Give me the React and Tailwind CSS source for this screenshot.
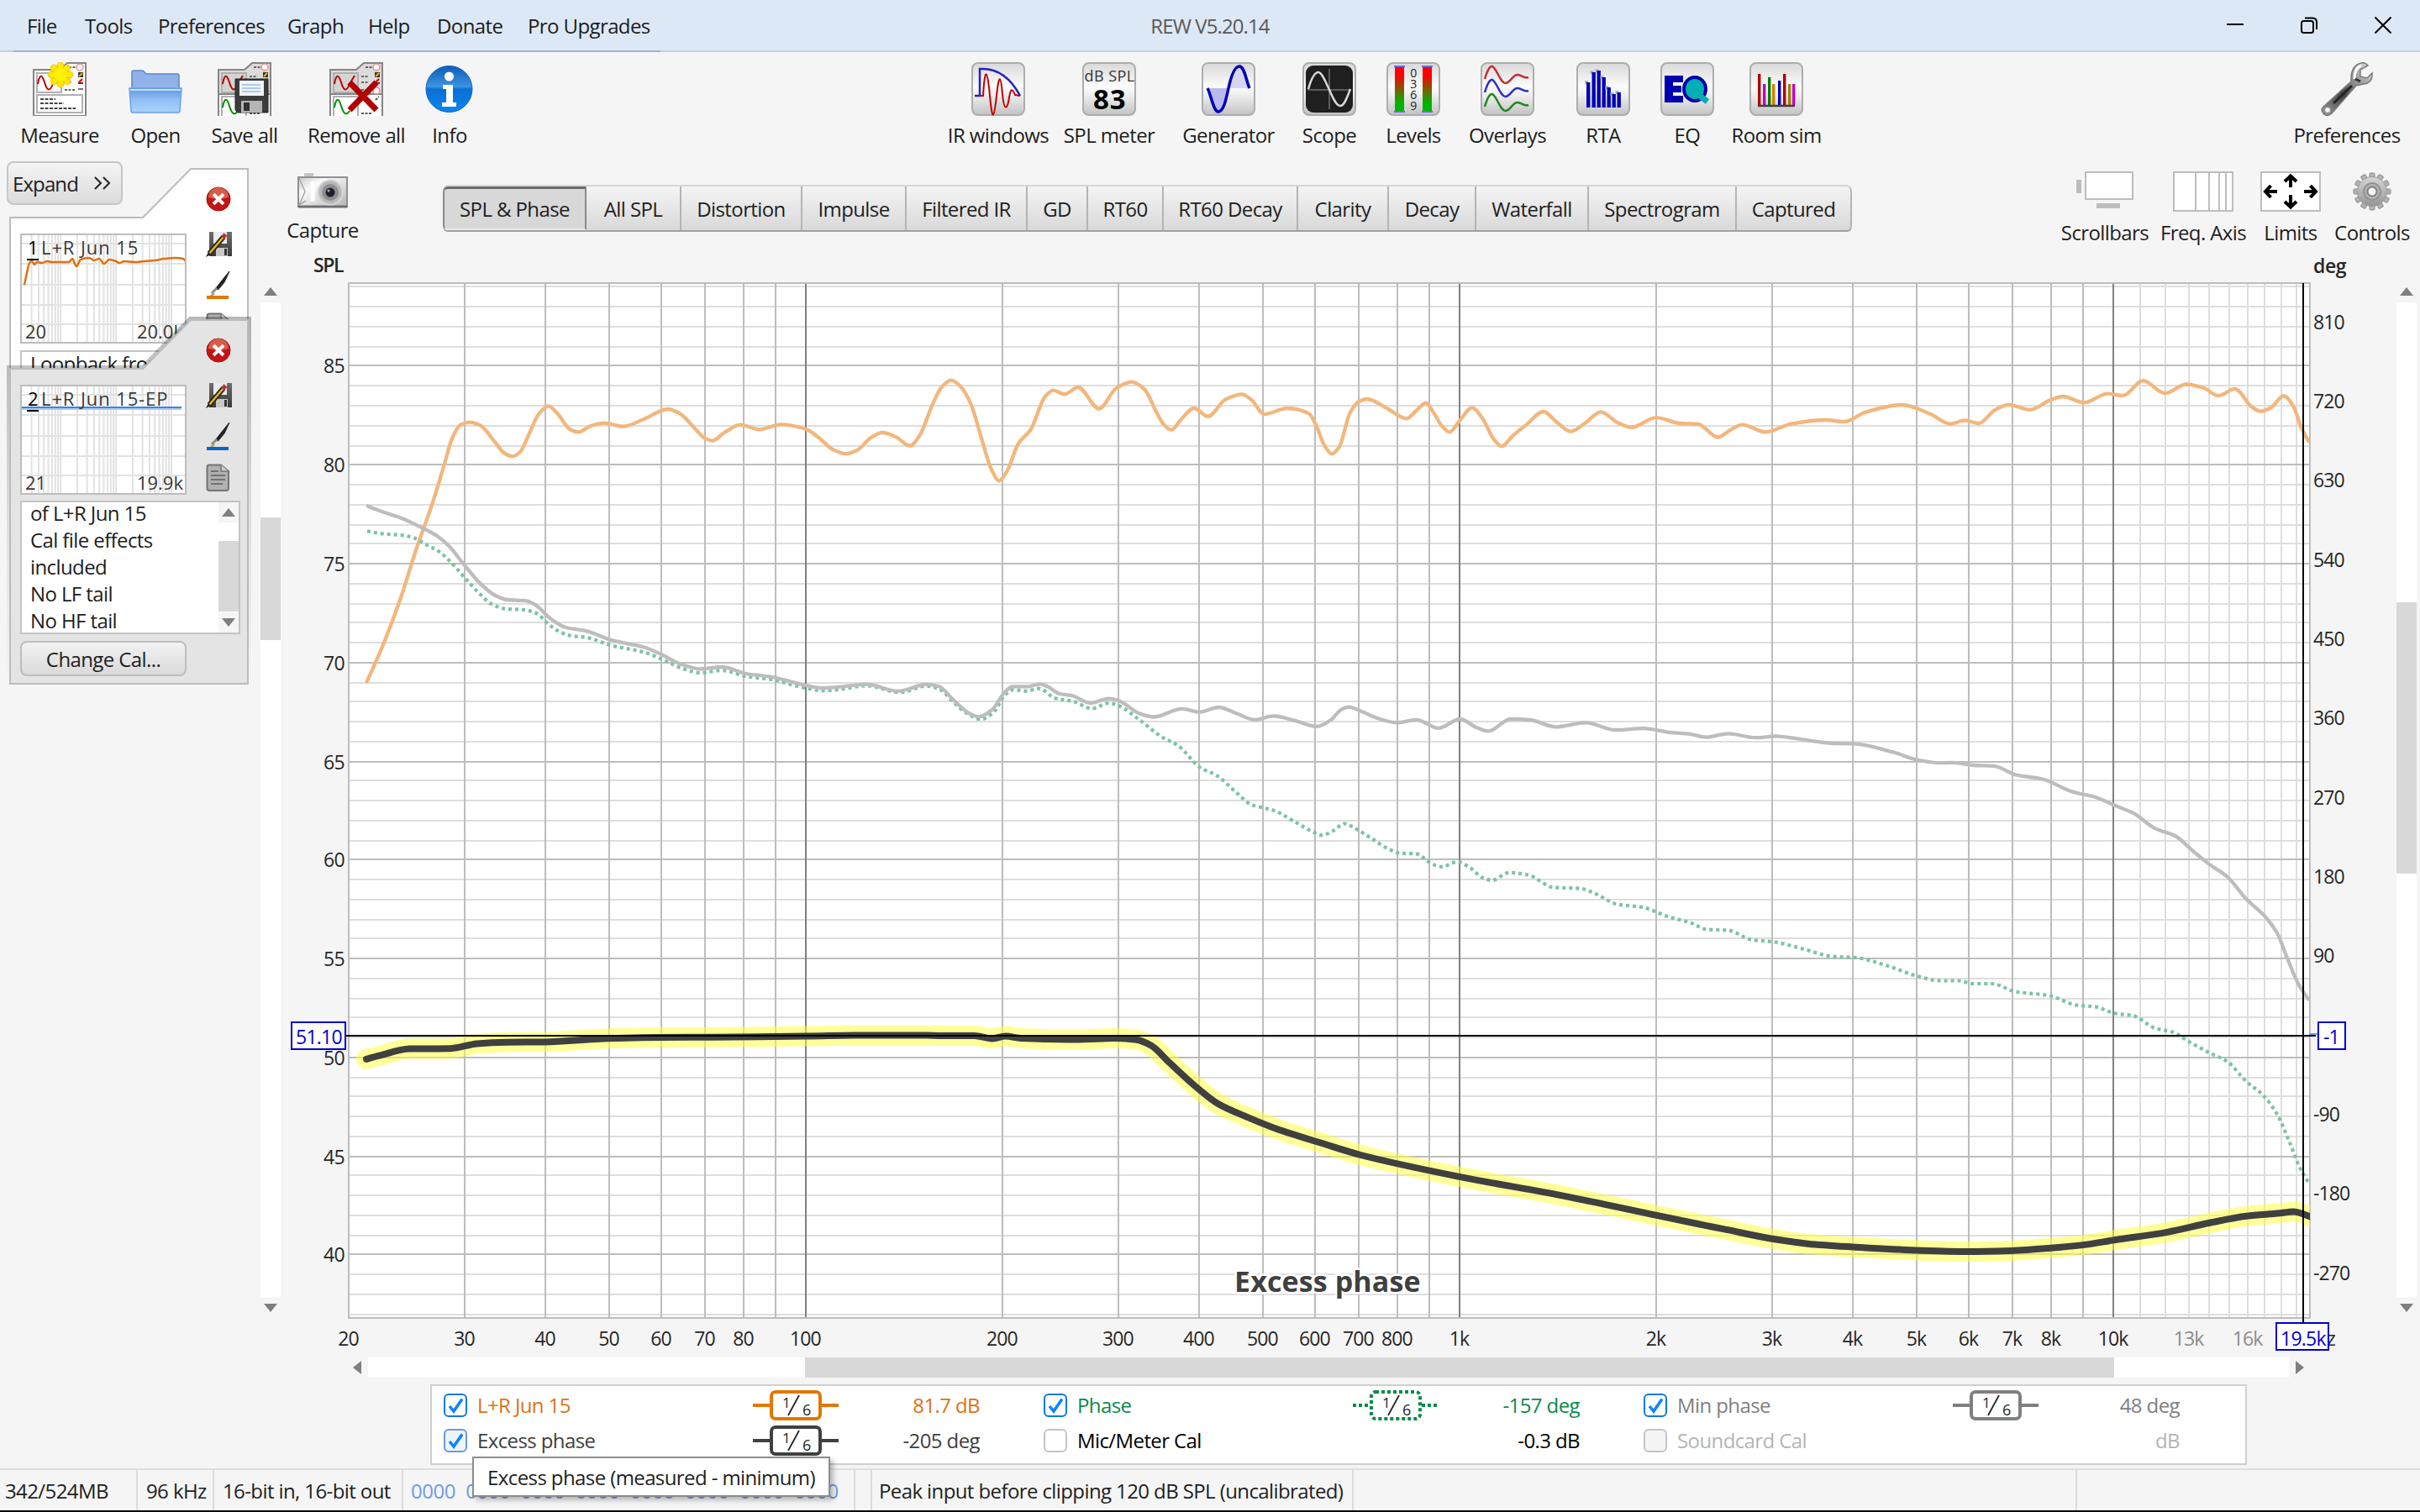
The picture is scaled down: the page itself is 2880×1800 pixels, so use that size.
import React from "react";

/* ---------- helpers ---------- */

// Monotone cubic path through a list of [x, y] points.
function smooth(p) {
  const n = p.length;
  const d = [];
  for (let i = 0; i < n - 1; i++) d.push((p[i + 1][1] - p[i][1]) / (p[i + 1][0] - p[i][0]));
  const m = [d[0]];
  for (let i = 1; i < n - 1; i++) {
    if (d[i - 1] * d[i] <= 0) m.push(0);
    else {
      const h0 = p[i][0] - p[i - 1][0];
      const h1 = p[i + 1][0] - p[i][0];
      m.push((3 * (h0 + h1)) / ((2 * h1 + h0) / d[i - 1] + (h1 + 2 * h0) / d[i]));
    }
  }
  m.push(d[n - 2]);
  let s = `M${p[0][0]} ${p[0][1]}`;
  for (let i = 0; i < n - 1; i++) {
    const h = (p[i + 1][0] - p[i][0]) / 3;
    s += `C${(p[i][0] + h).toFixed(1)} ${(p[i][1] + m[i] * h).toFixed(1)} ${(p[i + 1][0] - h).toFixed(1)} ${(p[i + 1][1] - m[i + 1] * h).toFixed(1)} ${p[i + 1][0]} ${p[i + 1][1]}`;
  }
  return s;
}

const snap = (v) => 2 * Math.floor(v / 2) + 1;
const fx = (f) => snap(959.4 + 778 * (Math.log10(f) - 2));
const dy = (db) => snap(435.99 + (85 - db) * 23.51);

/* ---------- traces ---------- */

const SPL = [[436,813],[457,765],[477.5,710],[495,655],[515,598],[529,552],[538,522],[548,506],[559.5,502.7],[572,506.7],[589.5,527],[601,540],[610,543.3],[619,538],[629.5,517],[641,493],[652.5,483.3],[664,493],[678,511],[688,514.3],[704,506.7],[718.5,503.7],[741.5,507.7],[767,498.7],[795,487],[810.5,493.3],[825,508],[839,521.7],[847.7,524.7],[862,515],[881,505.7],[904,511.3],[929,505.3],[959.6,511],[974,520.7],[991,535],[1007,540.3],[1020,536],[1037,520.7],[1050,515],[1066,520],[1083,530.7],[1094.5,518.3],[1109,483.3],[1120,461.7],[1132,452.7],[1143,460],[1155,480],[1169,525],[1179.5,558],[1189,572.3],[1198,561.7],[1212,528],[1226.5,511.7],[1244,471.7],[1253.5,464.7],[1267,469.3],[1283,461],[1308,486.5],[1328.5,462],[1347,454.7],[1361.6,463],[1377,492],[1384.6,505],[1394,511.7],[1405,500],[1421,486],[1437.6,495.7],[1458.6,475.4],[1478,469.3],[1489,475.8],[1504.5,493],[1532.5,486],[1558,492.6],[1565.7,505],[1576,530],[1585,540.4],[1593.8,532],[1606.5,491.8],[1616.7,478.4],[1627,475],[1650,485.7],[1674,498.3],[1685.6,488.8],[1697,479.6],[1706,491],[1716,507],[1725,514.4],[1736.6,501.4],[1752,485.3],[1764.7,498.7],[1777.4,522.4],[1787,531.3],[1800.4,518.6],[1815.7,506.4],[1837,490],[1851.4,501.4],[1869.3,513.6],[1887,503.3],[1905,490.3],[1925.4,503.3],[1942,508.7],[1970.8,497.2],[1999.4,504],[2020.8,504.8],[2044.3,520.5],[2060,511.4],[2073.6,505.7],[2101,514.3],[2132.7,504.3],[2172.4,500],[2194.7,502],[2220,490.7],[2263.6,482],[2297.5,492.9],[2320.8,504.6],[2338.7,500.4],[2354.7,504],[2375,487.5],[2390.6,481.8],[2416,487.9],[2440.5,476],[2455,472],[2480.7,479.3],[2508.3,468.6],[2526.3,471],[2550.5,453.2],[2576.2,468.2],[2601.9,457.5],[2622.2,461.8],[2640.2,471],[2659.6,462.9],[2680.4,485],[2690,489.6],[2702,485.7],[2717.7,471.4],[2728.9,482.9],[2738.6,508.9],[2748,526.5]];

const MIN_PHASE = [[436,601.7],[451.7,608],[477.5,616.7],[503,628.7],[520.5,638.3],[535,650.7],[551,670.7],[572,695],[589.5,709],[603.8,714],[626.7,715.3],[638,720.7],[655.4,736.7],[672.6,746.7],[695.6,750.7],[730,762.7],[767.4,770.7],[787.4,779.3],[810.4,790.7],[833.4,796.3],[859.2,794],[888,802],[916.6,805.7],[956.8,815.3],[976.9,819],[997,818],[1031.4,814.7],[1068.7,822.7],[1103,814.7],[1117.5,817.3],[1134.7,833.3],[1152,848.3],[1165,853.3],[1180.6,845],[1195,825],[1204.7,817.3],[1223.7,817.3],[1238,814.3],[1246.6,817.3],[1261,826],[1275.3,828],[1298,837],[1319.8,831.6],[1331,834],[1356.5,849.6],[1372.9,853.5],[1406.5,843.9],[1428,847.7],[1450,842],[1471.3,849.2],[1493.3,856.9],[1515.7,852.3],[1540.2,857.7],[1567.2,864.9],[1583.6,857.3],[1596.3,844.7],[1605,841.6],[1619.3,846.6],[1642.2,856],[1662.7,860.3],[1685.6,856.9],[1712,866.8],[1737.7,856],[1757,866],[1771.3,870.3],[1797.9,856],[1820.8,857],[1851.4,865.3],[1887,860.3],[1922.9,869],[1956,867.2],[1989,872.2],[2009.6,873.7],[2031,877.6],[2057,873.3],[2089,878.2],[2113.3,876.4],[2147.2,880.7],[2181.2,885],[2205.4,885.4],[2253.9,895.7],[2280.5,904.3],[2307.2,908.2],[2324,907.9],[2348.4,911],[2372.6,911.8],[2399.3,922.5],[2430.8,927.5],[2467,942.9],[2491.4,948.2],[2518,959.3],[2538.8,967.9],[2564,985.8],[2589.3,995.5],[2609,1012.4],[2628.6,1028.4],[2651,1044],[2673.5,1070.6],[2696,1091.5],[2710,1110.8],[2721.2,1138.5],[2735.2,1171.4],[2748,1190.8]];

const PHASE = [[437,632.3],[454.5,635.3],[480.4,637.3],[491.8,640],[506,647.7],[523.4,657.3],[537.8,670.7],[555,690],[572.2,708.3],[583.7,718.3],[600.9,724.7],[623.9,726],[638.2,730],[652.6,742.7],[664,751],[678.4,756.7],[698.5,759],[727.2,768.3],[767.4,776.7],[790.3,786],[813.3,796.3],[833.4,801],[859.2,798],[888,805.3],[916.6,808.7],[956.8,818.7],[979.7,822.3],[997,821],[1031.4,816.3],[1070.4,824.3],[1103,816.7],[1117.5,820],[1134.7,836],[1152,850],[1167.4,856.3],[1182,848.3],[1196.7,826.7],[1206.4,821],[1220.8,822.7],[1237,819.7],[1255,831],[1278,835.3],[1299.4,843.5],[1319.8,837],[1331,840],[1356.5,857.3],[1382,877],[1402.4,887.9],[1428,913.5],[1448.4,923.5],[1471.3,943.4],[1489.2,958],[1502,961.4],[1514.7,964.4],[1540.2,977.8],[1560.6,989.3],[1573.4,994.3],[1586,989.3],[1600.4,980.5],[1611.6,985.5],[1632,998],[1653.2,1011],[1667.8,1015.9],[1684.7,1016.3],[1706.5,1029.6],[1716.2,1031.8],[1734.2,1025.9],[1747.7,1031.8],[1764.7,1045],[1775.4,1048],[1796.2,1038.8],[1818,1041.4],[1849.5,1056.6],[1881,1057.7],[1898,1063.6],[1924.6,1076.5],[1953.7,1079.9],[1987.6,1092],[2011.9,1098.4],[2031.3,1106.5],[2056,1107.4],[2084,1118.6],[2112,1121.5],[2146,1129.7],[2179.6,1138.5],[2207.7,1140],[2247,1150],[2280.6,1161.7],[2308.7,1167.5],[2331,1167.5],[2348,1171],[2370.4,1171],[2398.5,1180.6],[2437.8,1185],[2471.4,1196.6],[2493.9,1198.6],[2516.3,1206.3],[2538.8,1209.2],[2564,1223.8],[2586.5,1229],[2606,1240.7],[2628.6,1252.9],[2651,1264],[2673.5,1287.7],[2693,1303.7],[2710,1326.5],[2724,1358],[2738,1392],[2748,1409]];

const EXCESS = [[436,1260.8],[451.8,1256.7],[487.5,1248.6],[536.6,1248.2],[567.9,1242.4],[603.6,1240.8],[648,1240.4],[724,1236.3],[786.6,1234.9],[849,1234.7],[959,1233.5],[1030,1232.4],[1102,1232.4],[1120,1233],[1160,1233],[1180,1236.4],[1197,1233.6],[1215,1236],[1280,1237.5],[1328.5,1236],[1352.7,1237.8],[1369.7,1244.5],[1391.5,1264.8],[1420.6,1291.5],[1449.6,1314],[1483.6,1329.6],[1522.3,1345],[1570.8,1360.3],[1619.3,1375],[1735.6,1400.6],[1861.6,1423.9],[1973,1447.2],[2056,1464.2],[2112,1475.3],[2151.5,1480.7],[2204.8,1484.5],[2280.6,1488.4],[2342.3,1489.9],[2392.9,1488.9],[2437.8,1486],[2482.7,1481.6],[2516.3,1476.3],[2578,1467.1],[2628.6,1456],[2673.5,1447.7],[2712.8,1444.3],[2729.6,1442.4],[2739.7,1444.8],[2754,1450.5]];

const FREQ_LABELS = [[20,"20"],[30,"30"],[40,"40"],[50,"50"],[60,"60"],[70,"70"],[80,"80"],[100,"100"],[200,"200"],[300,"300"],[400,"400"],[500,"500"],[600,"600"],[700,"700"],[800,"800"],[1000,"1k"],[2000,"2k"],[3000,"3k"],[4000,"4k"],[5000,"5k"],[6000,"6k"],[7000,"7k"],[8000,"8k"],[10000,"10k"],[13000,"13k"],[16000,"16k"]];
const DEG_LABELS = [810, 720, 630, 540, 450, 360, 270, 180, 90, null, -90, -180, -270];

function Graph() {
  const vert = [];
  for (const dec of [10, 100, 1000])
    for (let k = 2; k <= 10; k++) {
      const f = dec * k;
      if (f > 20) vert.push([f, k === 10 ? "#808080" : "#bdbdbd"]);
    }
  const fine = [11, 12, 13, 14, 15, 16, 17, 18, 19];
  const dbs = [];
  for (let v = 89; v >= 37; v--) dbs.push(v);
  return (
    <svg width="2470" height="1316" viewBox="340 296 2470 1316" className="block shrink-0 font-['Open_Sans',sans-serif]">
      <defs>
        <clipPath id="plot"><rect x="416" y="338" width="2333" height="1230" /></clipPath>
      </defs>
      <rect x="416" y="338" width="2332" height="1230" fill="#fff" />
      {dbs.map((v) => v % 5 !== 0 && <path key={v} d={`M416 ${dy(v)}H2748`} stroke="#dedede" strokeWidth="2" />)}
      {fine.map((k) => <path key={k} d={`M${fx(k * 1000)} 338V1568`} stroke="#dedede" strokeWidth="2" />)}
      {dbs.map((v) => v % 5 === 0 && <path key={v} d={`M416 ${dy(v)}H2748`} stroke="#bdbdbd" strokeWidth="2" />)}
      {vert.map(([f, c]) => <path key={f} d={`M${fx(f)} 338V1568`} stroke={c} strokeWidth="2" />)}
      <rect x="415" y="337" width="2334" height="1232" fill="none" stroke="#bdbdbd" strokeWidth="2" />

      <g fill="none" clipPath="url(#plot)">
        <path d={smooth(SPL)} stroke="#f3b67c" strokeWidth="4.3" strokeLinejoin="round" />
        <path d={smooth(PHASE)} stroke="#7cc4a2" strokeWidth="4.2" strokeDasharray="4 4" />
        <path d={smooth(MIN_PHASE)} stroke="#bdbdbd" strokeWidth="4.3" strokeLinejoin="round" />
        <path d={smooth(EXCESS)} stroke="#ffff3c" strokeOpacity="0.52" strokeWidth="24" strokeLinecap="round" strokeLinejoin="round" className="mix-blend-multiply" />
        <path d={smooth(EXCESS)} stroke="#404040" strokeWidth="8" strokeLinecap="round" strokeLinejoin="round" />
      </g>

      <text x="1469" y="1538" fontSize="34" fontWeight="700" fill="#404040" stroke="#fff" strokeWidth="5" paintOrder="stroke" textLength="221">Excess phase</text>

      <g fontSize="23" fill="#262626">
        {[85, 80, 75, 70, 65, 60, 55, 50, 45, 40].map((v) => (
          <text key={v} x="410" y={dy(v) + 9} textAnchor="end" textLength="25">{v}</text>
        ))}
        {DEG_LABELS.map((v, i) => v !== null && <text key={i} x="2753" y={391.5 + i * 94.35} letterSpacing="-0.9">{v}</text>)}
        {FREQ_LABELS.map(([f, t]) => (
          <text key={f} x={fx(f) - 0.5} y="1602" textAnchor="middle" letterSpacing="-0.9" fill={f > 10000 ? "#8c8c8c" : "#262626"}>{t}</text>
        ))}
        <text x="2779" y="1602" textAnchor="end" letterSpacing="-0.9">kHz</text>
        <text x="409" y="324" textAnchor="end" fontWeight="600" textLength="36">SPL</text>
        <text x="2753" y="325" fontWeight="600" textLength="39">deg</text>
      </g>

      <path d="M2748 1231H2758" stroke="#6f9be0" strokeWidth="2" />
      <path d="M411 1233H2756M2741 337V1574" stroke="#000" strokeWidth="2" />
      <g fill="#fff" stroke="#0000d0" strokeWidth="2">
        <rect x="347" y="1217" width="64" height="32" />
        <rect x="2759" y="1217" width="32" height="32" />
        <rect x="2709" y="1575" width="62" height="32" />
      </g>
      <g fontSize="23" fill="#0000d0">
        <text x="352" y="1243" textLength="55">51.10</text>
        <text x="2765" y="1243" letterSpacing="-0.9">-1</text>
        <text x="2714" y="1602" textLength="54">19.5k</text>
      </g>
    </svg>
  );
}

/* ---------- toolbar icons ---------- */

function Plate({ children, dark }) {
  return (
    <svg width="64" height="64" viewBox="0 0 64 64" className="block">
      <defs>
        <linearGradient id="plate" x1="0" y1="0" x2="0" y2="1">
          <stop offset="0" stopColor="#d9d9d9" />
          <stop offset="0.45" stopColor="#fbfbfb" />
          <stop offset="0.6" stopColor="#f0f0f0" />
          <stop offset="1" stopColor="#c2c2c2" />
        </linearGradient>
      </defs>
      <rect x="1" y="1" width="62" height="62" rx="7" fill="url(#plate)" stroke="#adadad" strokeWidth="2" />
      {dark && <rect x="4" y="4" width="56" height="56" rx="9" fill="#1f1f1f" />}
      {children}
    </svg>
  );
}

function MiniCard({ y, color, gray }) {
  return (
    <g transform={`translate(0 ${y})`}>
      <path d="M1 9H32L41 1H63V64H1Z" fill={gray ? "#dcdcdc" : "#fff"} stroke="#858585" strokeWidth="2" />
      <rect x="5" y="13" width="29" height="23" fill={gray ? "#d4d4d4" : "#fff"} stroke="#b0b0b0" strokeWidth="2" />
      <path d="M6 26C8 14 11 14 14 24S20 36 24 26L30 16" fill="none" stroke={color} strokeWidth="2" />
      <circle cx="56" cy="6" r="4" fill="#fff" stroke="#e88" strokeWidth="1.5" />
      <path d="M43 6h8M38 17h9M38 24h8M38 33h12" stroke="#666" strokeWidth="2" strokeDasharray="3 1.5" />
      <rect x="54" y="12" width="6" height="6" fill="#333" />
      <path d="M55 17l4-4" stroke="#e8c000" strokeWidth="2" />
      <path d="M54 25h6M55 24l4-4" stroke="#c00" strokeWidth="2" />
      <path d="M54 32h6" stroke="#777" strokeWidth="2" />
    </g>
  );
}

function MeasureIcon() {
  const rays = Array.from({ length: 8 }, (_, i) => i * 45);
  return (
    <svg width="64" height="64" viewBox="0 0 64 64" className="block">
      <MiniCard y={0} color="#c00000" />
      <rect x="5" y="39" width="54" height="21" fill="#fff" stroke="#b0b0b0" strokeWidth="2" />
      <path d="M9 44h18M9 49h28M9 55h42" stroke="#444" strokeWidth="2" strokeDasharray="4 1.5" />
      <circle cx="33" cy="15" r="11" fill="#ffe600" />
      {rays.map((a) => <ellipse key={a} cx="33" cy="4.5" rx="4" ry="4.5" fill="#ffe600" stroke="#f0c400" strokeWidth="1" transform={`rotate(${a} 33 15)`} />)}
      <circle cx="33" cy="15" r="8" fill="#fff200" />
    </svg>
  );
}

function OpenIcon() {
  return (
    <svg width="64" height="64" viewBox="0 0 64 64" className="block">
      <defs>
        <linearGradient id="fold" x1="0" y1="0" x2="0" y2="1">
          <stop offset="0" stopColor="#5e97e6" /><stop offset="0.5" stopColor="#93bff5" /><stop offset="1" stopColor="#a9d2fb" />
        </linearGradient>
      </defs>
      <path d="M4 32V12q0-2 2-2h10q2 0 3 2l2 2h37q2 0 2 2v16Z" fill="#8fb3e8" stroke="#5d87c7" strokeWidth="1.5" />
      <path d="M1 31h62l-2 27q0 2-2 2H5q-2 0-2-2Z" fill="url(#fold)" stroke="#6aa0ea" strokeWidth="1.5" />
      <path d="M2 33h60" stroke="#c8defa" strokeWidth="2" />
    </svg>
  );
}

function StackIcon({ kind }) {
  return (
    <svg width="64" height="64" viewBox="0 0 64 64" className="block">
      <MiniCard y={0} color="#c00000" gray />
      <g transform="translate(0 28)"><path d="M1 10H63V40H1Z" fill="#fff" stroke="#858585" strokeWidth="2" />
        <rect x="5" y="13" width="29" height="26" fill="#fff" stroke="#b0b0b0" strokeWidth="2" />
        <path d="M6 26C8 14 11 14 14 24S20 36 24 30" fill="none" stroke="#009000" strokeWidth="2" />
        <circle cx="56" cy="6" r="4" fill="#fff" stroke="#e88" strokeWidth="1.5" />
        <path d="M38 33h12M55 17l4-4M38 17h9" stroke="#555" strokeWidth="2" strokeDasharray="3 1.5" />
      </g>
      {kind === "save" ? (
        <g>
          <path d="M21 20h39v40H24l-3-3Z" fill="#3c3c3c" stroke="#222" />
          <rect x="26" y="22" width="29" height="18" fill="#eef4fb" />
          <path d="M29 27h22M29 31h22M29 35h22" stroke="#9dbde0" strokeWidth="1.5" />
          <rect x="28" y="46" width="25" height="14" fill="#b5b5b5" />
          <rect x="31" y="48" width="7" height="10" fill="#333" />
        </g>
      ) : (
        <path d="M24 24L56 57M56 24L24 57" stroke="#b00000" strokeWidth="7" />
      )}
    </svg>
  );
}

function InfoIcon() {
  return (
    <svg width="64" height="64" viewBox="0 0 64 64" className="block">
      <defs>
        <linearGradient id="info" x1="0" y1="0" x2="0" y2="1">
          <stop offset="0" stopColor="#0d5cb8" /><stop offset="0.45" stopColor="#3d93e0" /><stop offset="0.5" stopColor="#0a6fd4" /><stop offset="1" stopColor="#0a86f2" />
        </linearGradient>
      </defs>
      <circle cx="31.500" cy="32" r="27.5" fill="url(#info)" stroke="#0a64c0" />
      <circle cx="31.500" cy="17" r="5.5" fill="#fff" />
      <path d="M24 27h12v21h4v5H23v-5h5V32h-4Z" fill="#fff" />
    </svg>
  );
}

function IRIcon() {
  return (
    <Plate>
      <path d="M4 40H10V8Q40 6 58 40" fill="none" stroke="#2222c8" strokeWidth="2.5" />
      <path d="M10 40H14C16 4 19 8 22 40S27 68 30 40S35 16 37 38S43 56 45 42S50 34 52 39L58 40" fill="none" stroke="#c00000" strokeWidth="2" />
    </Plate>
  );
}
function SPLIcon() {
  return (
    <Plate>
      <text x="32" y="23" textAnchor="middle" fontSize="18" textLength="59" fill="#333" className="font-['Open_Sans',sans-serif]">dB SPL</text>
      <text x="32" y="56" textAnchor="middle" fontSize="33" fontWeight="700" fill="#000" textLength="38" className="font-['Open_Sans',sans-serif]">83</text>
    </Plate>
  );
}
function GenIcon() {
  return (
    <Plate>
      <path d="M7 31C11 38 14 59 20 59S29 45 32 31Z" fill="#b9b9ee" />
      <path d="M32 31C36 15 40 5 45 5S53 24 57 31Z" fill="#d6d6f2" />
      <path d="M7 31C11 38 14 59 20 59S29 45 32 31S39 5 45 5S53 22 57 31" fill="none" stroke="#0000b8" strokeWidth="3.5" />
    </Plate>
  );
}
function ScopeIcon() {
  return (
    <Plate dark>
      <path d="M32 8V56M6 33H58" stroke="#5c5c5c" strokeWidth="2" />
      <path d="M7 32C11 18 15 12 19 12S28 24 32 33S40 52 45 52S53 42 57 32" fill="none" stroke="#d8d8d8" strokeWidth="2.5" />
    </Plate>
  );
}
function LevelsIcon() {
  return (
    <Plate>
      <defs>
        <linearGradient id="lvl" x1="0" y1="0" x2="0" y2="1">
          <stop offset="0.2" stopColor="#ff0000" /><stop offset="0.8" stopColor="#00b400" />
        </linearGradient>
      </defs>
      {[10, 43].map((x) => (
        <g key={x}>
          <rect x={x} y="5" width="11" height="54" fill="url(#lvl)" />
          <path d={`M${x - 1} 5h13M${x - 1} 59h13`} stroke="#6a6ae0" strokeWidth="2" />
        </g>
      ))}
      {["0", "3", "6", "9"].map((t, i) => <text key={t} x="32" y={18 + i * 13} textAnchor="middle" fontSize="14" fill="#222" className="font-['Open_Sans',sans-serif]">{t}</text>)}
    </Plate>
  );
}
function OverlaysIcon() {
  const d = "M5 20C8 10 11 4 14 5C19 7 24 26 30 25C36 24 38 15 44 15C49 15 52 20 57 18";
  return (
    <Plate>
      <g fill="none" strokeWidth="2.5">
        <path d={d} stroke="#c03030" />
        <path d={d} stroke="#3030c0" transform="translate(0 16)" />
        <path d={d} stroke="#208820" transform="translate(0 33)" />
      </g>
    </Plate>
  );
}
function RTAIcon() {
  return (
    <Plate>
      {[[12, 24], [18.5, 12], [24.5, 10], [30.5, 18], [36.5, 30], [42.5, 38], [48.5, 36]].map(([x, y]) => (
        <g key={x}><rect x={x - 2} y={y - 2} width="4" height="4" fill="#b4b4b4" /><rect x={x} y={y} width="4.4" height={54 - y} fill="#0000b4" /></g>
      ))}
    </Plate>
  );
}
function EQIcon() {
  return (
    <Plate>
      <path d="M5 16h22v8H15v4h10v8H15v4h12v8H5Z" fill="#0000b0" />
      <ellipse cx="41" cy="32" rx="13" ry="14" fill="#00aeb4" stroke="#0000a8" strokeWidth="4" />
      <path d="M44 38l12 9" stroke="#00aeb4" strokeWidth="7" />
    </Plate>
  );
}
function RoomIcon() {
  return (
    <Plate>
      {[[10, 14, "#b00000"], [16, 26, "#c000c0"], [22, 18, "#008000"], [27, 26, "#d08000"], [34, 22, "#0000b4"], [40, 14, "#b00000"], [46, 26, "#a08000"], [51, 26, "#c000c0"]].map(([x, y, c]) => (
        <rect key={x} x={x} y={y} width="3.4" height={51 - y} fill={c} />
      ))}
      <path d="M10 52H54" stroke="#404040" strokeWidth="2.5" />
    </Plate>
  );
}
function WrenchIcon() {
  return (
    <svg width="64" height="64" viewBox="0 0 64 64" className="block">
      <defs>
        <linearGradient id="wr" x1="0" y1="1" x2="1" y2="0">
          <stop offset="0" stopColor="#9e9e9e" /><stop offset="0.42" stopColor="#444" /><stop offset="0.62" stopColor="#8a8a8a" /><stop offset="1" stopColor="#e2e2e2" />
        </linearGradient>
      </defs>
      <path d="M4 53L37 23Q36 4 49 1Q54 0 57 4L48 9L48 17L56 19L62 13Q63 25 52 26L43 28L14 61Q8 66 4 61T4 53Z" fill="url(#wr)" stroke="#7c7c7c" strokeWidth="1.5" />
      <circle cx="9" cy="57" r="3.5" fill="#f5f5f5" stroke="#888" />
      <path d="M16 49L38 28" stroke="#242424" strokeWidth="3" />
      <path d="M41 20Q41 7 49 4" stroke="#fff" strokeWidth="3" fill="none" />
      <path d="M42 20L48 23" stroke="#333" strokeWidth="3" />
    </svg>
  );
}

function ToolItem({ icon, label }) {
  return (
    <div className="flex flex-col items-center">
      {icon}
      <span className="mt-[7px] leading-8">{label}</span>
    </div>
  );
}

/* ---------- header ---------- */

function TitleBar() {
  return (
    <div className="grid h-[62px] shrink-0 grid-cols-[1200px_480px_1200px] border-b-2 border-[#c5cfdf] bg-[#dde8f6]">
      <div className="pl-4">
        <div className="-mb-0.5 grid h-[62px] w-[770px] grid-cols-[69px_87px_154px_96px_82px_108px_auto] items-center border-b-2 border-[#a7b4c6] pt-0.5 pl-4 text-[#1c1c1c]">
          {["File", "Tools", "Preferences", "Graph", "Help", "Donate", "Pro Upgrades"].map((t) => <span key={t}>{t}</span>)}
        </div>
      </div>
      <div className="flex items-center justify-center pt-0.5 tracking-[-0.9px] text-[#585858]">REW V5.20.14</div>
      <div className="flex items-center justify-end gap-[68px] pr-[34px]">
        <svg width="20" height="20" viewBox="0 0 20 20"><path d="M0 9H20" stroke="#000" strokeWidth="2" /></svg>
        <svg width="20" height="20" viewBox="0 0 20 20" fill="none" stroke="#000" strokeWidth="2"><rect x="1" y="5" width="14" height="14" rx="2.5" /><path d="M5 1.5H14Q19 1.5 19 6.500V15" /></svg>
        <svg width="20" height="20" viewBox="0 0 20 20"><path d="M0.500 0.500L19.500 19.500M19.500 0.500L0.500 19.500" stroke="#000" strokeWidth="2" /></svg>
      </div>
    </div>
  );
}

function Toolbar() {
  return (
    <div className="flex h-[124px] shrink-0 pt-3">
      <div className="grid grid-cols-[142px_86px_126px_140px_82px]">
        <ToolItem icon={<MeasureIcon />} label="Measure" />
        <ToolItem icon={<OpenIcon />} label="Open" />
        <ToolItem icon={<StackIcon kind="save" />} label="Save all" />
        <ToolItem icon={<StackIcon kind="remove" />} label="Remove all" />
        <ToolItem icon={<InfoIcon />} label="Info" />
      </div>
      <div className="ml-[547px] grid grid-cols-[130px_134px_150px_90px_110px_114px_114px_86px_126px]">
        <ToolItem icon={<IRIcon />} label="IR windows" />
        <ToolItem icon={<SPLIcon />} label="SPL meter" />
        <ToolItem icon={<GenIcon />} label="Generator" />
        <ToolItem icon={<ScopeIcon />} label="Scope" />
        <ToolItem icon={<LevelsIcon />} label="Levels" />
        <ToolItem icon={<OverlaysIcon />} label="Overlays" />
        <ToolItem icon={<RTAIcon />} label="RTA" />
        <ToolItem icon={<EQIcon />} label="EQ" />
        <ToolItem icon={<RoomIcon />} label="Room sim" />
      </div>
      <div className="mr-[14px] ml-auto w-[146px]">
        <ToolItem icon={<WrenchIcon />} label="Preferences" />
      </div>
    </div>
  );
}

/* ---------- sidebar ---------- */

function CloseIcon() {
  return (
    <svg width="30" height="30" viewBox="0 0 30 30" className="block">
      <circle cx="15" cy="15" r="14" fill="#c41414" stroke="#a01010" />
      <path d="M3 13A12 12 0 0 1 27 13Q15 17 3 13Z" fill="#e07a60" opacity="0.7" />
      <path d="M10.500 10.500L19.500 19.500M19.500 10.500L10.500 19.500" stroke="#fff" strokeWidth="4" strokeLinecap="square" />
    </svg>
  );
}
function SaveIcon() {
  return (
    <svg width="32" height="30" viewBox="0 0 32 30" className="block">
      <defs>
        <linearGradient id="disk" x1="0" y1="0" x2="0" y2="1"><stop offset="0" stopColor="#6e6e6e" /><stop offset="1" stopColor="#3a3a3a" /></linearGradient>
      </defs>
      <path d="M4 0H31V29H4Z" fill="url(#disk)" />
      <path d="M9 0H25V14H9Z" fill="#e8ecf0" />
      <path d="M12 19H26V29H12Z" fill="#c8c8c8" />
      <path d="M22 20h3v8h-3Z" fill="#333" />
      <path d="M4 26L21 6" stroke="#2c2400" strokeWidth="6" />
      <path d="M4 26L21 6" stroke="#dcb238" strokeWidth="2.500" />
      <path d="M20 7L23.500 3" stroke="#c03030" strokeWidth="5" />
      <path d="M0 30L3 24L6 27Z" fill="#222" />
    </svg>
  );
}
function BrushIcon({ color }) {
  return (
    <svg width="30" height="34" viewBox="0 0 30 34" className="block">
      <path d="M28 1L19 12L12 21L14.500 23L22 14Z" fill="#222" stroke="#222" />
      <path d="M13 21L7 27" stroke="#8a8a8a" strokeWidth="3" />
      <path d="M8 26Q5 31 3 31Q7 32 11 28Z" fill="#b8a060" />
      <path d="M1 32H27" stroke={color} strokeWidth="4" />
    </svg>
  );
}
function NoteIcon() {
  return (
    <svg width="30" height="34" viewBox="0 0 30 34" className="block">
      <path d="M4 1.500H18L27 9V29Q27 32 24 32H4Q1.500 32 1.500 29V4Q1.500 1.500 4 1.500Z" fill="#b0b0b0" stroke="#747474" strokeWidth="2" />
      <path d="M18 1.500V9H27" fill="#ccc" stroke="#747474" strokeWidth="1.500" />
      <path d="M6 9h9M6 14h17M6 19h17M6 24h14" stroke="#727272" strokeWidth="2" />
    </svg>
  );
}

const THUMB_SPL = [[3,59],[6,45],[9,33],[12,31],[15,35],[18,32],[24,33],[30,31],[36,32],[44,32],[56,32],[60,28],[65,37],[70,29],[80,27],[86,30],[92,28],[98,34],[104,29],[112,31],[116,33],[122,31],[134,32],[146,31],[158,30],[170,28],[182,27],[192,28],[196,33]];

function Thumb({ n, name, lo, hi, trace }) {
  const v = [];
  for (const dec of [10, 100, 1000, 10000])
    for (let k = 1; k <= 9; k++) {
      const x = 66 * Math.log10((dec * k) / 20);
      if (x > 2 && x < 196) v.push(x);
    }
  return (
    <div className="relative h-[131px] w-[198px] overflow-hidden border-2 border-[#bdbdbd] bg-white">
      <svg width="194" height="127" viewBox="0 0 194 127" className="absolute inset-0">
        {v.map((x) => <path key={x} d={`M${x} 0V127`} stroke="#e2e2e2" strokeWidth="2" />)}
        {[10, 34, 59, 83, 106].map((y) => <path key={y} d={`M0 ${y}H194`} stroke="#e2e2e2" strokeWidth="2" />)}
        {trace === "spl" ? (
          <path d={smooth(THUMB_SPL)} fill="none" stroke="#e07010" strokeWidth="2.500" />
        ) : (
          <><path d="M0 27H190" stroke="#a9cdf2" strokeWidth="2" /><path d="M0 25H190" stroke="#3f86d6" strokeWidth="2" /></>
        )}
      </svg>
      <div className="relative flex h-full flex-col justify-between pr-0.5 pl-1 text-[22px] leading-7 text-[#3a3a3a]">
        <div className="flex whitespace-nowrap">
          <span className="ml-0.5 w-[14px] border-b-2 border-black text-center text-black">{n}</span>
          <span className="ml-[3px] tracking-[0.9px]">{name}</span>
        </div>
        <div className="-mb-px flex justify-between tracking-normal"><span>{lo}</span><span>{hi}</span></div>
      </div>
    </div>
  );
}

function FolderShape({ height, active }) {
  const d = `M12 59H170L227 1H295V${height - 1}H12Z`;
  return (
    <svg width="304" height={height + 2} viewBox={`0 0 304 ${height + 2}`} className="absolute top-0 left-0 overflow-visible">
      <defs>
        <linearGradient id="edge" x1="0" y1="0" x2="0" y2="1">
          <stop offset="0" stopColor="#000" stopOpacity="0.28" /><stop offset="0.5" stopColor="#000" stopOpacity="0.1" /><stop offset="1" stopColor="#000" stopOpacity="0" />
        </linearGradient>
      </defs>
      {active && <path d={d} fill="none" stroke="url(#edge)" strokeWidth="8" />}
      <path d={d} fill={active ? "#e4e4e4" : "#fff"} stroke="#bcbcbc" strokeWidth="2" />
    </svg>
  );
}

function Card({ thumb, color, children, height, active }) {
  return (
    <div className="relative">
      <FolderShape height={height} active={active} />
      <div className="relative pl-6">
        <div className="flex h-[210px]">
          <div className="pt-[78px]">{thumb}</div>
          <div className="ml-[23px] flex flex-col pt-[22px]">
            <CloseIcon />
            <div className="mt-6"><SaveIcon /></div>
            <div className="mt-4"><BrushIcon color={color} /></div>
            <div className="mt-[16px]"><NoteIcon /></div>
          </div>
        </div>
        {children}
      </div>
    </div>
  );
}

function Arrow({ dir }) {
  const d = { up: "M0 10L8 0L16 10Z", down: "M0 0L8 10L16 0Z", left: "M10 0L0 8L10 16Z", right: "M0 0L10 8L0 16Z" }[dir];
  const vert = dir === "up" || dir === "down";
  return <svg width={vert ? 16 : 10} height={vert ? 10 : 16} className="block shrink-0"><path d={d} fill="#7f7f7f" /></svg>;
}

function Sidebar() {
  return (
    <div className="flex w-[334px] shrink-0">
      <div className="h-[1562px] w-[304px] overflow-hidden pt-1.5">
        <div className="relative z-10 ml-2 flex h-[52px] w-[138px] items-center rounded-lg border-2 border-[#c6c6c6] bg-linear-to-b from-[#f4f4f4] to-[#dcdcdc] pl-[5px]">
          <span className="w-[97px] pt-0.5 tracking-[-0.9px]">Expand</span>
          <svg width="20" height="16" viewBox="0 0 20 16" fill="none" stroke="#222" strokeWidth="2"><path d="M1 1L8 8L1 15M11 1L18 8L11 15" /></svg>
        </div>
        <div className="-mt-11 h-[240px] overflow-hidden">
          <Card height={400} color="#e07800" thumb={<Thumb n="1" name="L+R Jun 15" lo="20" hi="20.0k" trace="spl" />}>
            <div className="mt-[7px] h-[60px] w-[262px] border-2 border-[#c4c4c4] bg-white pl-2.5 leading-7 whitespace-nowrap">Loopback from</div>
          </Card>
        </div>
        <div className="relative -mt-[60px]">
          <Card active height={435} color="#0a64c8" thumb={<Thumb n="2" name="L+R Jun 15-EP" lo="21" hi="19.9k" trace="flat" />}>
            <div className="mt-[6px] flex h-[159px] w-[262px] justify-between overflow-hidden border-2 border-[#c4c4c4] bg-white">
              <div className="-mt-[3px] pl-2.5 leading-8 whitespace-nowrap">
                {["of L+R Jun 15", "Cal file effects", "included", "No LF tail", "No HF tail"].map((t) => <div key={t}>{t}</div>)}
              </div>
              <div className="flex w-6 flex-col items-center bg-white">
                <div className="flex h-6 w-full items-center justify-center bg-[#f5f5f5]"><Arrow dir="up" /></div>
                <div className="mt-[22px] h-[84px] w-full bg-[#d8d8d8]" />
                <div className="mt-px flex h-6 w-full items-center justify-center bg-[#f5f5f5]"><Arrow dir="down" /></div>
              </div>
            </div>
            <div className="mt-2 flex h-[42px] w-[198px] items-center justify-center rounded-lg border-2 border-[#bdbdbd] bg-linear-to-b from-[#f2f2f2] to-[#dadada] pt-0.5">Change Cal...</div>
          </Card>
        </div>
      </div>
      <div className="ml-1.5 flex w-6 flex-col items-center pt-[156px]">
        <Arrow dir="up" />
        <div className="mt-2 h-[1184px] w-6 bg-white pt-[256px]"><div className="h-[146px] bg-[#d8d8d8]" /></div>
        <div className="mt-2"><Arrow dir="down" /></div>
      </div>
    </div>
  );
}

/* ---------- graph header ---------- */

function CameraIcon() {
  return (
    <svg width="60" height="42" viewBox="0 0 60 42" className="block">
      <defs>
        <linearGradient id="cam" x1="0" y1="0" x2="1" y2="1"><stop offset="0" stopColor="#c8c8c8" /><stop offset="0.3" stopColor="#fafafa" /><stop offset="1" stopColor="#b4b4b4" /></linearGradient>
      </defs>
      <path d="M8 0h11v5H8Z" fill="#c4c4c4" />
      <rect x="1" y="5" width="58" height="35" fill="url(#cam)" stroke="#909090" strokeWidth="2" />
      <path d="M1 40H59" stroke="#707070" strokeWidth="3" />
      <path d="M2 6L9 22L2 38M2 38L10 33" fill="none" stroke="#aaa" strokeWidth="1.500" />
      <path d="M18 10V34" stroke="#fff" strokeWidth="5" />
      <circle cx="39" cy="23" r="14.500" fill="#b8b8b8" stroke="#d6d6d6" strokeWidth="2" />
      <circle cx="39" cy="23" r="10" fill="#8e8e8e" />
      <circle cx="39" cy="23" r="5.500" fill="#20202e" />
      <circle cx="37" cy="21" r="1.500" fill="#9ab" />
    </svg>
  );
}

function ScrollbarsIcon() {
  return (
    <svg width="72" height="50" viewBox="0 0 72 50" className="block">
      <rect x="2" y="11" width="6" height="16" fill="#bdbdbd" /><rect x="13" y="2" width="56" height="32" fill="#fff" stroke="#bdbdbd" strokeWidth="2" /><rect x="26" y="39" width="28" height="6" fill="#bdbdbd" />
    </svg>
  );
}
function FreqIcon() {
  return (
    <svg width="72" height="50" viewBox="0 0 72 50" className="block">
      <path d="M1 2H71V48H1ZM27 2V48M43 2V48M55 2V48M63 2V48" fill="#fff" stroke="#bdbdbd" strokeWidth="2" />
    </svg>
  );
}
function LimitsIcon() {
  return (
    <svg width="72" height="50" viewBox="0 0 72 50" className="block">
      <rect x="1" y="2" width="70" height="46" fill="#fff" stroke="#bdbdbd" strokeWidth="2" />
      <g fill="none" stroke="#000" strokeWidth="4">
        <path d="M36 20V7M29 13L36 6.500L43 13" /><path d="M36 29V43M29 37L36 43.500L43 37" />
        <path d="M20 25H7M12.500 18L6 25L12.500 32" /><path d="M52 25H65M59.500 18L66 25L59.500 32" />
      </g>
    </svg>
  );
}
function GearIcon() {
  const teeth = Array.from({ length: 12 }, (_, i) => i * 30);
  return (
    <svg width="48" height="50" viewBox="0 0 48 50" className="block">
      <defs>
        <linearGradient id="gear" x1="0" y1="0" x2="0" y2="1"><stop offset="0" stopColor="#d6d6d6" /><stop offset="1" stopColor="#949494" /></linearGradient>
      </defs>
      {teeth.map((a) => <rect key={a} x="21" y="3" width="6" height="8" rx="1" fill="#b4b4b4" stroke="#8c8c8c" transform={`rotate(${a} 24 25)`} />)}
      <circle cx="24" cy="25" r="17.500" fill="url(#gear)" stroke="#9a9a9a" />
      <circle cx="24" cy="25" r="10" fill="#b0b0b0" stroke="#8c8c8c" strokeWidth="1.500" />
      <circle cx="24" cy="25" r="5.500" fill="#f5f5f5" stroke="#808080" strokeWidth="2" />
    </svg>
  );
}

function GraphTool({ icon, label }) {
  return <div className="flex flex-col items-center whitespace-nowrap">{icon}<span className="mt-2 leading-8">{label}</span></div>;
}

const TABS = ["All SPL", "Distortion", "Impulse", "Filtered IR", "GD", "RT60", "RT60 Decay", "Clarity", "Decay", "Waterfall", "Spectrogram", "Captured"];

function GraphHeader() {
  return (
    <div className="flex h-[110px] shrink-0">
      <div className="w-[193px] pt-[20px]">
        <div className="flex w-[100px] flex-col items-center"><CameraIcon /><span className="mt-[10px] leading-8">Capture</span></div>
      </div>
      <div className="mt-[34px] grid h-[56px] grid-cols-[171px_113px_144px_124px_144px_72px_90px_160px_108px_104px_134px_176px_137px] rounded-md border-t-2 border-b-2 border-t-[#d6d6d6] border-b-[#a2a2a2] bg-linear-to-b from-[#f4f4f4] to-[#d9d9d9]">
        <div className="flex items-center justify-center rounded-l-md border-2 border-t-3 border-[#8a8a8a] border-t-[#6a6a6a] border-b-[#e8e8e8] bg-[#d8d8d8]">SPL &amp; Phase</div>
        {TABS.map((t) => <div key={t} className="flex items-center justify-center border-r-2 border-[#b4b4b4] pt-0.5 last:rounded-r-md">{t}</div>)}
      </div>
      <div className="mr-[3px] ml-auto grid grid-cols-[112px_122px_86px_108px] pt-[17px]">
        <GraphTool icon={<ScrollbarsIcon />} label="Scrollbars" />
        <GraphTool icon={<FreqIcon />} label="Freq. Axis" />
        <GraphTool icon={<LimitsIcon />} label="Limits" />
        <GraphTool icon={<GearIcon />} label="Controls" />
      </div>
    </div>
  );
}

/* ---------- legend ---------- */

function Check({ on, soft }) {
  return (
    <svg width="28" height="28" viewBox="0 0 28 28" className="block">
      <rect x="1" y="1" width="26" height="26" rx="5" fill={on ? (soft ? "#eef4fb" : "#fff") : soft ? "#f4f4f4" : "#fff"} stroke={on ? (soft ? "#6a9ad8" : "#0a78e6") : "#c4c4c4"} strokeWidth="2" />
      {on && <path d="M7 15L12 21L22 6.500" fill="none" stroke="#0a84ff" strokeWidth="3.500" />}
    </svg>
  );
}

function SixthIcon({ color, dotted }) {
  const dash = dotted ? "4 3" : undefined;
  return (
    <svg width="102" height="38" viewBox="0 0 102 38" className="block font-['Open_Sans',sans-serif]">
      <path d="M0 19H20M82 19H102" stroke={color} strokeWidth="4" strokeDasharray={dash} />
      <rect x="22" y="3" width="58" height="32" rx="5" fill="#fff" stroke={color} strokeWidth="4" strokeDasharray={dash} />
      <text x="35" y="22" fontSize="17" fill="#262626">1</text>
      <path d="M42 31L55 7" stroke="#262626" strokeWidth="1.800" />
      <text x="59" y="31" fontSize="18" fill="#262626">6</text>
    </svg>
  );
}

function LegendRow({ on, soft, label, value, color, icon, dotted }) {
  const tone = { orange: "text-[#dd7210]", dark: "text-[#404040]", green: "text-[#0a8a4a]", black: "text-black", gray: "text-[#808080]", pale: "text-[#b4b4b4]" }[color];
  const stroke = { orange: "#e07800", dark: "#404040", green: "#0a8a4a", gray: "#808080" }[color];
  return (
    <div className={`flex h-[42px] items-center ${tone}`}>
      <Check on={on} soft={soft} />
      <span className="ml-3 w-[328px]">{label}</span>
      <div className="w-[102px]">{icon && <SixthIcon color={stroke} dotted={dotted} />}</div>
      <span className="w-[168px] text-right">{value}</span>
    </div>
  );
}

function Legend() {
  return (
    <div className="ml-[178px] grid h-[96px] w-[2162px] grid-cols-[714px_714px_auto] border-2 border-[#cfcfcf] bg-white pt-0.5 pl-[14px]">
      <div>
        <LegendRow on label="L+R Jun 15" value="81.7 dB" color="orange" icon />
        <LegendRow on soft label="Excess phase" value="-205 deg" color="dark" icon />
      </div>
      <div>
        <LegendRow on label="Phase" value="-157 deg" color="green" icon dotted />
        <LegendRow label="Mic/Meter Cal" value="-0.3 dB" color="black" />
      </div>
      <div>
        <LegendRow on label="Min phase" value="48 deg" color="gray" icon />
        <LegendRow soft label="Soundcard Cal" value="dB" color="pale" />
      </div>
    </div>
  );
}

function StatusBar() {
  return (
    <div className="grid h-[52px] shrink-0 grid-cols-[164px_91px_225px_538px_20px_573px_861px_auto] border-t-2 border-b-2 border-t-[#dedede] border-b-black whitespace-nowrap *:flex *:items-center *:border-r-2 *:border-[#dcdcdc] *:pt-0.5 *:pl-1.5">
      <div>342/524MB</div>
      <div className="pl-2.5!">96 kHz</div>
      <div className="pl-2.5!">16-bit in, 16-bit out</div>
      <div className="pl-[9px]! tracking-[-0.5px] text-[#6f9ae8] [word-spacing:6.5px]">0000 0000 0000 0000 0000 0000 0000 0000</div>
      <div />
      <div className="pl-2!">Peak input before clipping 120 dB SPL (uncalibrated)</div>
      <div />
      <div className="border-r-0!" />
    </div>
  );
}

export default function App() {
  return (
    <div className="relative flex h-[1800px] w-[2880px] flex-col overflow-hidden bg-[#f5f5f5] font-['Open_Sans',sans-serif] text-[24px] leading-8 tracking-[-0.6px] text-[#1e1e1e]">
      <TitleBar />
      <Toolbar />
      <div className="flex h-[1562px] shrink-0">
        <Sidebar />
        <div className="flex flex-1 flex-col">
          <GraphHeader />
          <div className="flex h-[1316px] shrink-0 pl-1.5">
            <Graph />
            <div className="ml-[42px] flex w-6 flex-col items-center pt-[46px]">
              <Arrow dir="up" />
              <div className="mt-2 h-[1184px] w-6 bg-white pt-[357px]"><div className="h-[323px] bg-[#d8d8d8]" /></div>
              <div className="mt-2"><Arrow dir="down" /></div>
            </div>
          </div>
          <div className="mt-1 flex h-6 items-center pl-[86px]">
            <Arrow dir="left" />
            <div className="mx-2 h-6 w-[2286px] bg-white pl-[520px]"><div className="h-full w-[1558px] bg-[#d8d8d8]" /></div>
            <Arrow dir="right" />
          </div>
          <div className="mt-2"><Legend /></div>
        </div>
      </div>
      <StatusBar />
      <div className="absolute top-[1734px] left-[562px] flex h-[48px] w-[426px] items-center justify-center border-2 border-[#8c8c8c] bg-white pt-0.5 whitespace-nowrap shadow-[4px_4px_6px_rgba(0,0,0,0.25)]">
        Excess phase (measured - minimum)
      </div>
    </div>
  );
}
